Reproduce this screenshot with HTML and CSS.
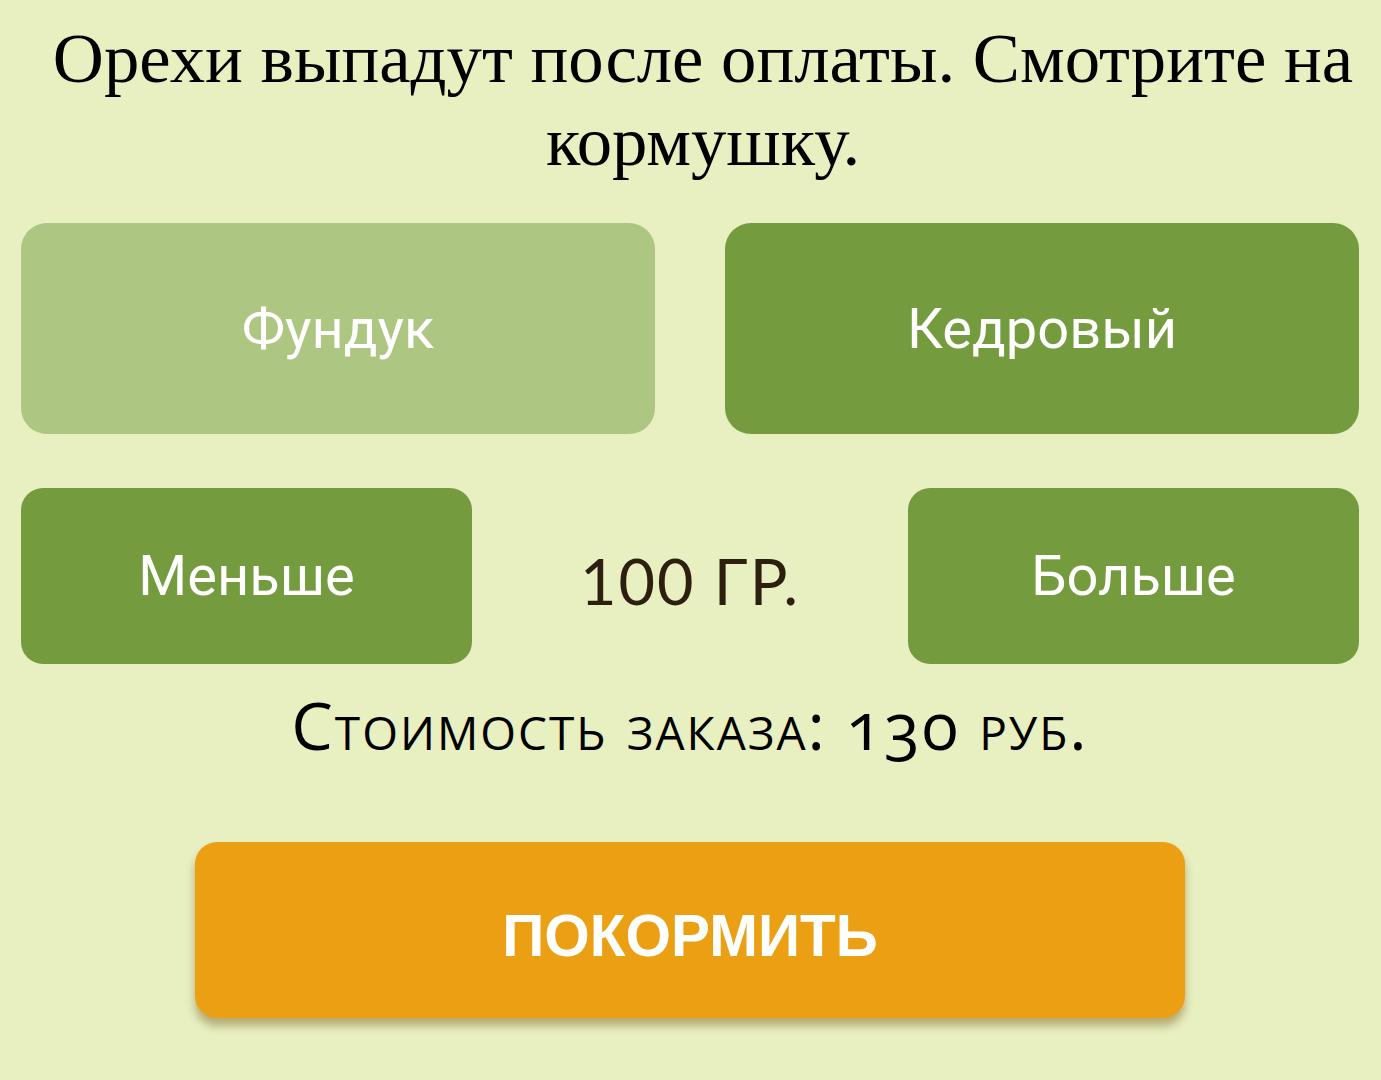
FILE: index.html
```html
<!DOCTYPE html>
<html lang="ru">
<head>
<meta charset="utf-8">
<title>Покормить</title>
<link rel="stylesheet" href="styles.css">
</head>
<body>
<main class="page">
  <h1 class="title">Орехи выпадут после оплаты. Смотрите на кормушку.</h1>
  <div class="nuts">
    <button class="btn btn-light">Фундук</button>
    <button class="btn btn-green">Кедровый</button>
  </div>
  <div class="amount">
    <button class="btn btn-green btn-small">Меньше</button>
    <div class="weight">100 гр.</div>
    <button class="btn btn-green btn-small">Больше</button>
  </div>
  <p class="cost">Стоимость заказа: 130 руб.</p>
  <div class="feed-wrap">
    <button class="feed">ПОКОРМИТЬ</button>
  </div>
</main>
</body>
</html>
```
FILE: styles.css
```css
html, body {
  margin: 0;
  padding: 0;
  background: #e8efc1;
}
body {
  width: 1381px;
  height: 1080px;
  overflow: hidden;
}
.page {
  padding: 0 22px 0 21px;
  display: flex;
  flex-direction: column;
}
.title {
  margin: 17px -20px 0 6px;
  font-family: "Liberation Serif", serif;
  font-weight: normal;
  font-size: 70.7px;
  line-height: 83px;
  text-align: center;
  color: #000;
}
.nuts {
  margin-top: 40px;
  display: grid;
  grid-template-columns: 1fr 1fr;
  column-gap: 70px;
}
.btn {
  border: none;
  border-radius: 26px;
  color: #fff;
  font-family: Roboto, sans-serif;
  font-size: 56px;
  height: 211px;
  padding: 0;
}
.btn-light { background: #adc682; }
.btn-green { background: #749c3e; }
.amount {
  margin-top: 54px;
  display: flex;
  align-items: center;
  justify-content: space-between;
}
.btn-small {
  width: 451px;
  height: 176px;
  border-radius: 22px;
}
.weight {
  flex: 1;
  text-align: center;
  font-family: Lato, sans-serif;
  font-size: 63px;
  letter-spacing: 2px;
  color: #2d1f10;
  text-transform: uppercase;
  padding-top: 8px;
}
.cost {
  margin: 25px 0 0;
  text-align: center;
  font-family: "Open Sans", sans-serif;
  font-stretch: 90%;
  font-size: 66px;
  line-height: 70px;
  letter-spacing: 2px;
  font-variant: small-caps;
  font-variant-numeric: oldstyle-nums;
  color: #000;
}
.feed-wrap {
  display: flex;
  justify-content: center;
  margin-top: 83px;
}
.feed {
  width: 990px;
  height: 176px;
  border: none;
  border-radius: 22px;
  padding: 10px 0 0;
  background: #eba013;
  color: #fff;
  font-family: "Liberation Sans", Arial, sans-serif;
  font-weight: bold;
  font-size: 58.5px;
  box-shadow: 0 8px 8px rgba(120, 90, 20, 0.45);
}
```
